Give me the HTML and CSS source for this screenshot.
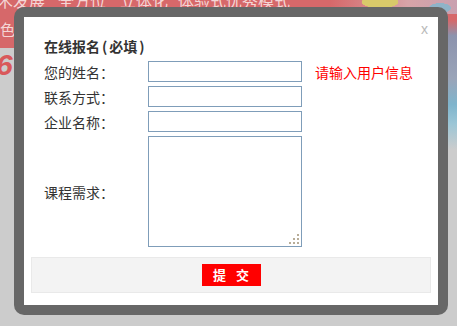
FILE: index.html
```html
<!DOCTYPE html>
<html lang="zh-CN">
<head>
<meta charset="utf-8">
<title>在线报名</title>
<link rel="stylesheet" href="styles.css">
</head>
<body>
<div class="page">
  <div class="band">
    <div class="band-line1"><span class="w1">术发展</span><span class="w2">全方位</span><span class="w3">立体化</span><span class="w4">体验式优秀模式</span></div>
    <div class="band-line2">色</div>
    <div class="band-art"></div>
  </div>
  <div class="content">
    <div class="big-num">6</div>
    <div class="side-art"></div>
  </div>
</div>

<div class="modal">
  <div class="panel">
    <span class="close">x</span>
    <div class="form">
      <div class="title">在线报名<span class="paren">(</span>必填<span class="paren">)</span></div>
      <div class="row">
        <label class="label">您的姓名：</label>
        <input class="field" type="text">
        <span class="hint">请输入用户信息</span>
      </div>
      <div class="row">
        <label class="label">联系方式：</label>
        <input class="field" type="text">
      </div>
      <div class="row">
        <label class="label">企业名称：</label>
        <input class="field" type="text">
      </div>
      <div class="row">
        <label class="label">课程需求：</label>
        <div class="area-wrap">
          <textarea class="area"></textarea>
          <span class="grip"></span>
        </div>
      </div>
    </div>
    <div class="footer">
      <button class="submit" type="button"><span class="s1">提</span><span class="s2">交</span></button>
    </div>
  </div>
</div>
</body>
</html>
```

FILE: styles.css
```css
* { box-sizing: border-box; }

html, body {
  margin: 0;
  padding: 0;
  width: 457px;
  height: 326px;
  overflow: hidden;
}

body {
  background: #cccccc;
  font-family: "Noto Sans CJK SC", "Liberation Sans", sans-serif;
  position: relative;
}

/* ---- backdrop page ---- */
.page {
  width: 457px;
  height: 326px;
}

.band {
  height: 48px;
  background: #d6686a;
  position: relative;
  overflow: hidden;
  color: #f4d6d6;
}

.band-line1 {
  font-size: 16px;
  line-height: 20px;
  margin-top: -10px;
  white-space: nowrap;
  margin-left: -3px;
}

.band-line1 .w2 { margin-left: 13px; }
.band-line1 .w3 { margin-left: 14px; }
.band-line1 .w4 { margin-left: 10px; }

.band-line2 {
  font-size: 15px;
  line-height: 20px;
  margin-top: 9px;
}

.band-art {
  position: absolute;
  left: 330px;
  top: -6px;
  width: 130px;
  height: 20px;
  background:
    radial-gradient(ellipse 30px 10px at 50px 8px, #d9c96a 60%, transparent 62%),
    radial-gradient(ellipse 18px 8px at 110px 14px, #8fb3c8 60%, transparent 62%),
    linear-gradient(90deg, #d6686a, #d8a4a8 60%, #c8a0b0);
}

.content {
  position: relative;
  height: 278px;
}

.big-num {
  color: #d9585a;
  font-family: "Liberation Sans", sans-serif;
  font-weight: bold;
  font-style: italic;
  font-size: 30px;
  line-height: 30px;
  margin-left: -4px;
  padding-top: 2px;
}

.side-art {
  position: absolute;
  right: 0;
  top: -28px;
  width: 12px;
  height: 130px;
  background: linear-gradient(180deg, #d6686a 0, #8c93ad 12%, #9aa4b8 45%, #7fb4cc 65%, #9cc6d6 80%, #cccccc 100%);
}

/* ---- modal ---- */
.modal {
  position: absolute;
  left: 14px;
  top: 7px;
  width: 434px;
  height: 308px;
  background: #676767;
  border-radius: 10px;
  padding: 10px;
}

.panel {
  position: relative;
  background: #ffffff;
  height: 288px;
  padding: 19px 7px 0;
}

.close {
  position: absolute;
  top: 4px;
  right: 10px;
  font-family: "Liberation Sans", sans-serif;
  font-size: 14px;
  color: #b9b9b9;
  line-height: 16px;
}

.form {
  padding: 0 13px;
  color: #333333;
  font-size: 14px;
}

.title {
  font-weight: bold;
  font-size: 14px;
  line-height: 20px;
  margin-bottom: 5px;
  color: #333;
}

.title .paren {
  padding: 0 2px;
}

.row {
  display: flex;
  align-items: center;
  margin-bottom: 4px;
}

.label {
  width: 104px;
  flex: none;
  font-size: 14px;
  line-height: 18px;
}

.field {
  width: 154px;
  height: 21px;
  border: 1px solid #7f9db9;
  margin: 0;
  padding: 0 2px;
  font-size: 12px;
  background: #fff;
}

.hint {
  margin-left: 13px;
  color: #ff0000;
  font-size: 14px;
}

.area-wrap {
  position: relative;
  width: 154px;
  height: 111px;
}

.area {
  display: block;
  width: 154px;
  height: 111px;
  border: 1px solid #7f9db9;
  margin: 0;
  padding: 2px;
  resize: none;
  font-size: 12px;
}

.grip {
  position: absolute;
  right: 3px;
  bottom: 3px;
  width: 10px;
  height: 10px;
  background:
    linear-gradient(#b8ad98, #b8ad98) 8px 0 / 2px 2px no-repeat,
    linear-gradient(#b8ad98, #b8ad98) 4px 4px / 2px 2px no-repeat,
    linear-gradient(#b8ad98, #b8ad98) 8px 4px / 2px 2px no-repeat,
    linear-gradient(#b8ad98, #b8ad98) 0 8px / 2px 2px no-repeat,
    linear-gradient(#b8ad98, #b8ad98) 4px 8px / 2px 2px no-repeat,
    linear-gradient(#b8ad98, #b8ad98) 8px 8px / 2px 2px no-repeat;
}

.footer {
  margin-top: 10px;
  height: 36px;
  background: #f3f3f3;
  border: 1px solid #e9e9e9;
  display: flex;
  align-items: center;
  justify-content: center;
}

.submit {
  width: 59px;
  height: 22px;
  background: #ff0000;
  color: #ffffff;
  border: none;
  margin: 0;
  padding: 0;
  font-family: "Noto Sans CJK SC", sans-serif;
  font-weight: bold;
  font-size: 13px;
  line-height: 22px;
  cursor: pointer;
}

.submit .s2 {
  margin-left: 10px;
}
```
